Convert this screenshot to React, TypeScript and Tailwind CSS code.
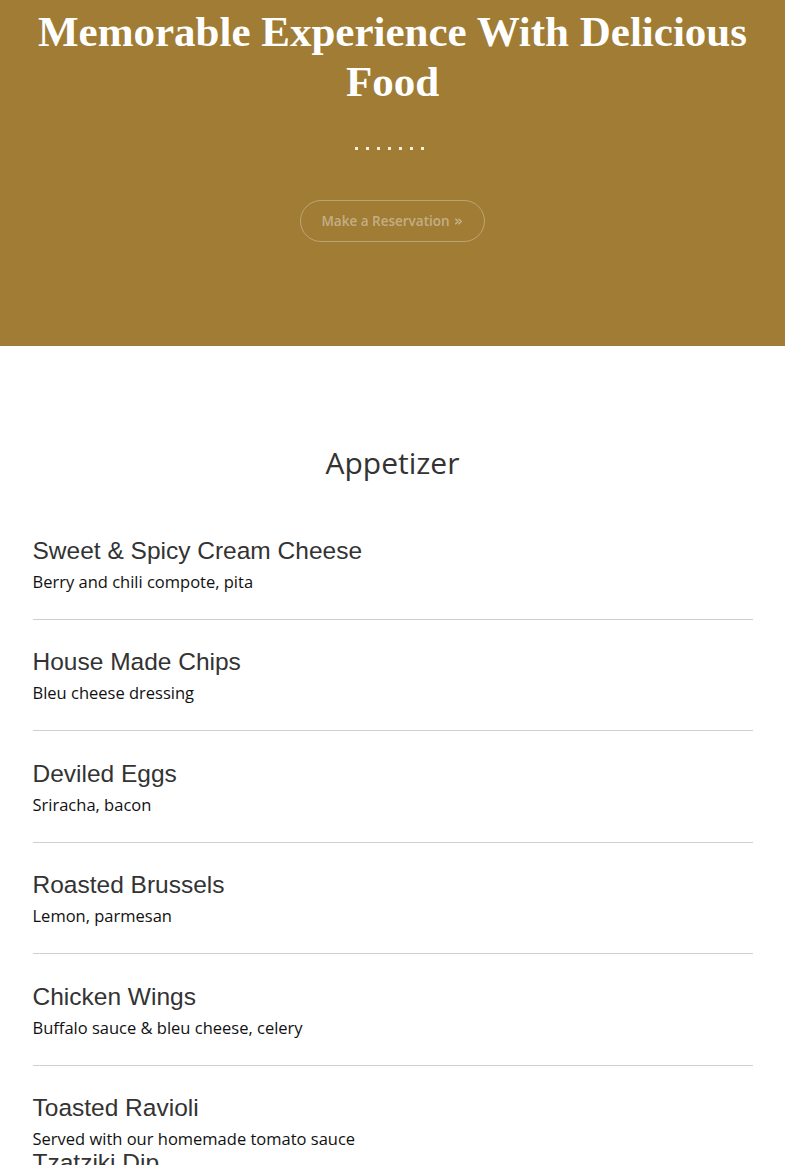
import React from 'react';
import { ChevronsRight } from 'lucide-react';

const ITEMS = [
  { name: 'Sweet & Spicy Cream Cheese', desc: 'Berry and chili compote, pita' },
  { name: 'House Made Chips', desc: 'Bleu cheese dressing' },
  { name: 'Deviled Eggs', desc: 'Sriracha, bacon' },
  { name: 'Roasted Brussels', desc: 'Lemon, parmesan' },
  { name: 'Chicken Wings', desc: 'Buffalo sauce & bleu cheese, celery' },
  { name: 'Toasted Ravioli', desc: 'Served with our homemade tomato sauce', last: true },
  { name: 'Tzatziki Dip', desc: 'Cucumber, dill, pita' },
];

export default function App() {
  return (
    <div className="min-h-screen bg-white">
      {/* hero */}
      <section className="bg-[#a07c35] h-[346px] flex flex-col items-center pt-[7px]">
        <h1 className="text-center text-white font-bold text-[43px] leading-[50px] px-6 font-['Liberation_Serif',serif]">
          Memorable Experience With Delicious Food
        </h1>
        <div className="flex gap-[8px] mt-[40px] -ml-[6px]">
          {Array.from({ length: 7 }).map((_, i) => (
            <span key={i} className="w-[3px] h-[3px] bg-[#fbf1d6]" />
          ))}
        </div>
        <button className="mt-[50px] h-[42px] px-[20px] rounded-full border border-white/30 text-white/40 text-[13.5px] font-semibold font-['Open_Sans',sans-serif] flex items-center gap-[3px]">
          Make a Reservation
          <ChevronsRight size={11} strokeWidth={3.5} />
        </button>
      </section>

      {/* menu */}
      <section className="max-w-[720px] mx-auto pt-[96px]">
        <h2 className="text-center text-[30px] leading-[42px] text-[#333] font-['Open_Sans',sans-serif] mb-[53px]">
          Appetizer
        </h2>
        {ITEMS.map((item) => (
          <div
            key={item.name}
            className={item.last ? '' : 'border-b border-[#cfcfcf] pb-[27px] mb-[28.4px]'}
          >
            <h3 className="text-[24.5px] leading-[28px] text-[#333] font-['Liberation_Sans',sans-serif] mb-[7px]">
              {item.name}
            </h3>
            <p className="text-[16.5px] leading-[20px] text-[#111] font-['Open_Sans',sans-serif]">{item.desc}</p>
          </div>
        ))}
      </section>
    </div>
  );
}
